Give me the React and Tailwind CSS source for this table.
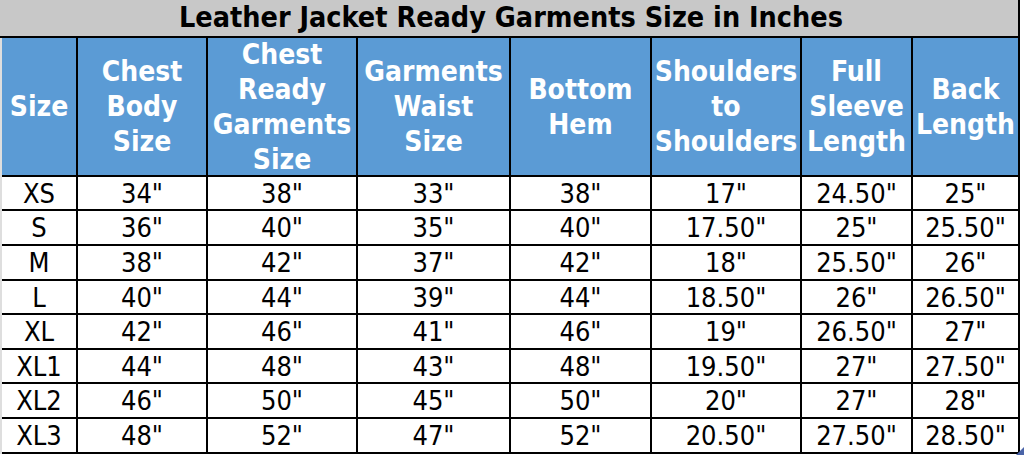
import React from "react";

const cols = ["w-[76px]", "w-[130px]", "w-[150px]", "w-[153px]", "w-[141px]", "w-[150px]", "w-[111px]", "w-[107px]"];

const headers = [
  ["Size"],
  ["Chest", "Body", "Size"],
  ["Chest", "Ready", "Garments", "Size"],
  ["Garments", "Waist", "Size"],
  ["Bottom", "Hem"],
  ["Shoulders", "to", "Shoulders"],
  ["Full", "Sleeve", "Length"],
  ["Back", "Length"],
];

const rows = [
  ["XS", '34"', '38"', '33"', '38"', '17"', '24.50"', '25"'],
  ["S", '36"', '40"', '35"', '40"', '17.50"', '25"', '25.50"'],
  ["M", '38"', '42"', '37"', '42"', '18"', '25.50"', '26"'],
  ["L", '40"', '44"', '39"', '44"', '18.50"', '26"', '26.50"'],
  ["XL", '42"', '46"', '41"', '46"', '19"', '26.50"', '27"'],
  ["XL1", '44"', '48"', '43"', '48"', '19.50"', '27"', '27.50"'],
  ["XL2", '46"', '50"', '45"', '50"', '20"', '27"', '28"'],
  ["XL3", '48"', '52"', '47"', '52"', '20.50"', '27.50"', '28.50"'],
];

const heights = ["h-[34px]", "h-[35px]", "h-[35px]", "h-[34px]", "h-[35px]", "h-[34px]", "h-[35px]", "h-[35px]"];

const font = { fontFamily: '"DejaVu Sans Condensed", "DejaVu Sans", sans-serif' };

export default function App() {
  return (
    <div className="relative w-[1024px] h-[455px] bg-white overflow-hidden" style={font}>
      {/* title bar */}
      <div className="w-[1020px] h-[38px] bg-[#c8c8c8] border-b-2 border-r-2 border-black flex items-center justify-center">
        <span className="text-[28.5px] font-bold text-black leading-none pl-[4px]">
          Leather Jacket Ready Garments Size in Inches
        </span>
      </div>

      <div className="flex">
        <div className="w-[2px] bg-[#dedede]" />
        <div className="flex flex-col">
          {/* header */}
          <div className="flex h-[139px]">
            {headers.map((lines, i) => (
              <div
                key={i}
                className={`${cols[i]} bg-[#5b9bd5] border-r-2 border-b-2 border-black flex flex-col items-center justify-center text-white font-bold text-[28px] leading-[35px]`}
              >
                {lines.map((l, j) => (
                  <span key={j}>{l}</span>
                ))}
              </div>
            ))}
          </div>

          {/* data */}
          {rows.map((r, ri) => (
            <div key={ri} className={`flex ${heights[ri]}`}>
              {r.map((c, ci) => (
                <div
                  key={ci}
                  className={`${cols[ci]} border-r-2 border-b-2 border-black flex items-center justify-center text-[27px] text-black leading-none`}
                >
                  {c}
                </div>
              ))}
            </div>
          ))}
        </div>
      </div>

      {/* corner handle */}
      <svg className="absolute right-0 bottom-0" width="8" height="8" viewBox="0 0 8 8">
        <polygon points="8,0 8,8 0,8" fill="#4a64a8" />
      </svg>
    </div>
  );
}
